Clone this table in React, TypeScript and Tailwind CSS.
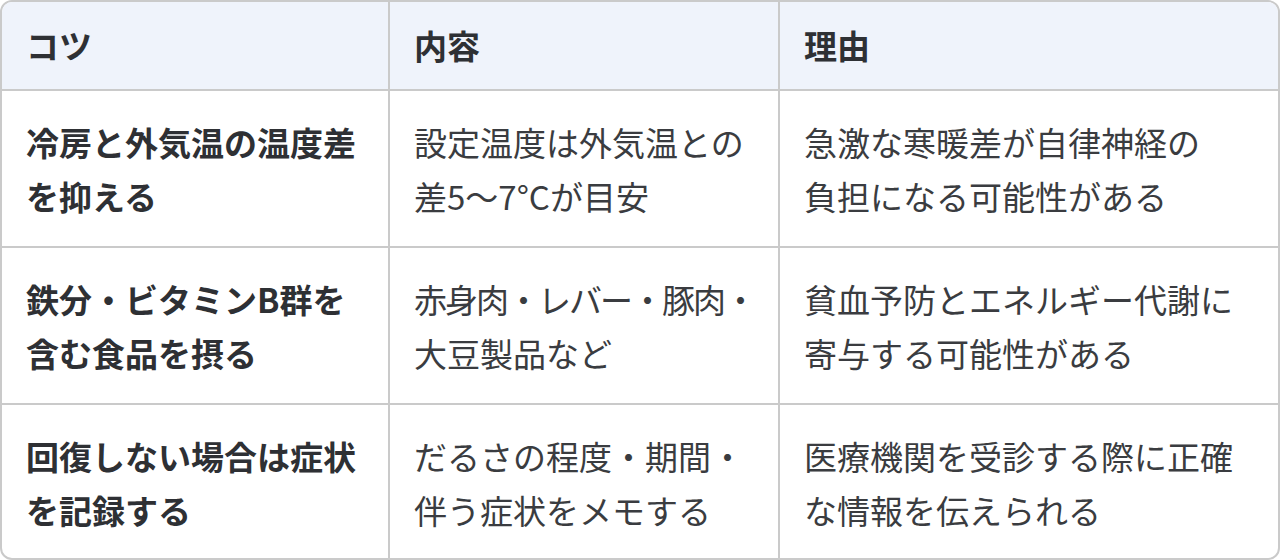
import type { ReactNode } from "react";

const rows: { tip: ReactNode[]; detail: ReactNode[]; reason: ReactNode[] }[] = [
  {
    tip: ["冷房と外気温の温度差", "を抑える"],
    detail: ["設定温度は外気温との", "差5〜7°Cが目安"],
    reason: ["急激な寒暖差が自律神経の", "負担になる可能性がある"],
  },
  {
    tip: ["鉄分・ビタミンB群を", "含む食品を摂る"],
    detail: [
      <span className="tracking-[-2px]">赤身肉・レバー・豚肉・</span>,
      "大豆製品など",
    ],
    reason: ["貧血予防とエネルギー代謝に", "寄与する可能性がある"],
  },
  {
    tip: ["回復しない場合は症状", "を記録する"],
    detail: ["だるさの程度・期間・", "伴う症状をメモする"],
    reason: ["医療機関を受診する際に正確", "な情報を伝えられる"],
  },
];

const Lines = ({ lines }: { lines: ReactNode[] }) => (
  <>
    {lines.map((line, i) => (
      <div key={i} className="whitespace-nowrap">
        {line}
      </div>
    ))}
  </>
);

const App = () => {
  return (
    <div
      className="w-[1280px] h-[560px] bg-white"
      style={{ fontFamily: '"Noto Sans CJK JP", "Noto Sans", sans-serif' }}
    >
      <div className="border-2 border-[#cacaca] rounded-[12px] overflow-hidden text-[33px] leading-[54px]">
        <div className="grid grid-cols-[386px_390px_500px] bg-[#eff3fb] font-bold text-[#2e3034]">
          <div className="px-6 pt-4 pb-[17px]">コツ</div>
          <div className="px-6 pt-4 pb-[17px] border-l-2 border-[#cacaca]">内容</div>
          <div className="px-6 pt-4 pb-[17px] border-l-2 border-[#cacaca]">理由</div>
        </div>
        {rows.map((row, i) => (
          <div
            key={i}
            className="grid grid-cols-[386px_390px_500px] border-t-2 border-[#cacaca] h-[157px] last:h-[155px]"
          >
            <div className="px-6 pt-6 font-bold text-[#2e3034]">
              <Lines lines={row.tip} />
            </div>
            <div className="px-6 pt-6 border-l-2 border-[#cacaca] text-[#3a3c40]">
              <Lines lines={row.detail} />
            </div>
            <div className="px-6 pt-6 border-l-2 border-[#cacaca] text-[#3a3c40]">
              <Lines lines={row.reason} />
            </div>
          </div>
        ))}
      </div>
    </div>
  );
};

export default App;
